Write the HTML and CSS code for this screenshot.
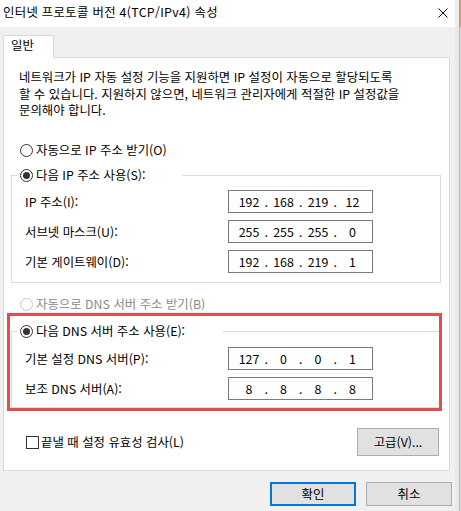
FILE: index.html
```html
<!DOCTYPE html>
<html lang="ko">
<head>
<meta charset="utf-8">
<title>인터넷 프로토콜 버전 4(TCP/IPv4) 속성</title>
<link rel="stylesheet" href="styles.css">
</head>
<body>
<div class="screen">
  <div class="window">
    <div class="titlebar">
      <span class="title">인터넷 프로토콜 버전 4(TCP/IPv4) 속성</span>
      <svg class="close" width="10" height="10" viewBox="0 0 10 10"><path d="M0.5 0.5 L9.5 9.5 M9.5 0.5 L0.5 9.5" stroke="#000" stroke-width="1" fill="none"/></svg>
    </div>
    <div class="tabs">
      <div class="tab">일반</div>
    </div>
    <div class="panel">
      <p class="desc">네트워크가 IP 자동 설정 기능을 지원하면 IP 설정이 자동으로 할당되도록<br>할 수 있습니다. 지원하지 않으면, 네트워크 관리자에게 적절한 IP 설정값을<br>문의해야 합니다.</p>

      <div class="radio radio-auto-ip"><span class="radio-mark"></span><span>자동으로 IP 주소 받기(O)</span></div>

      <div class="group group-ip">
        <div class="legend legend-ip"><span class="radio-mark checked"></span><span>다음 IP 주소 사용(S):</span></div>
        <div class="row first"><span class="label">IP 주소(I):</span>
          <div class="ipbox"><span class="oct">192</span><span class="dot">.</span><span class="oct">168</span><span class="dot">.</span><span class="oct">219</span><span class="dot">.</span><span class="oct">12</span></div></div>
        <div class="row"><span class="label">서브넷 마스크(U):</span>
          <div class="ipbox"><span class="oct">255</span><span class="dot">.</span><span class="oct">255</span><span class="dot">.</span><span class="oct">255</span><span class="dot">.</span><span class="oct">0</span></div></div>
        <div class="row"><span class="label">기본 게이트웨이(D):</span>
          <div class="ipbox"><span class="oct">192</span><span class="dot">.</span><span class="oct">168</span><span class="dot">.</span><span class="oct">219</span><span class="dot">.</span><span class="oct">1</span></div></div>
      </div>

      <div class="radio radio-auto-dns disabled"><span class="radio-mark"></span><span>자동으로 DNS 서버 주소 받기(B)</span></div>

      <div class="group group-dns">
        <div class="legend legend-dns"><span class="radio-mark checked"></span><span>다음 DNS 서버 주소 사용(E):</span></div>
        <div class="row first"><span class="label">기본 설정 DNS 서버(P):</span>
          <div class="ipbox"><span class="oct">127</span><span class="dot">.</span><span class="oct">0</span><span class="dot">.</span><span class="oct">0</span><span class="dot">.</span><span class="oct">1</span></div></div>
        <div class="row"><span class="label">보조 DNS 서버(A):</span>
          <div class="ipbox"><span class="oct">8</span><span class="dot">.</span><span class="oct">8</span><span class="dot">.</span><span class="oct">8</span><span class="dot">.</span><span class="oct">8</span></div></div>
      </div>

      <div class="options">
        <div class="check"><span class="checkbox"></span><span>끝낼 때 설정 유효성 검사(L)</span></div>
        <button class="btn btn-adv">고급(V)...</button>
      </div>

      <div class="highlight"></div>
    </div>
    <div class="actions">
      <button class="btn btn-dialog btn-primary">확인</button>
      <button class="btn btn-dialog">취소</button>
    </div>
  </div>
  <div class="edge"><div class="edge-top"></div><div class="edge-body"></div></div>
</div>
</body>
</html>
```

FILE: styles.css
```css
html, body {
  margin: 0;
  padding: 0;
}
body {
  background: #f0f0f0;
  font-family: "Noto Sans CJK KR", "Noto Sans", sans-serif;
  font-size: 12.4px;
  color: #000;
}
.screen {
  display: flex;
  width: 461px;
  height: 511px;
  overflow: hidden;
}
.window {
  flex: none;
  width: 455px;
  background: #f0f0f0;
}
.titlebar {
  height: 27px;
  box-sizing: border-box;
  background: #fff;
  display: flex;
  align-items: center;
  justify-content: space-between;
  padding: 0 7px 3px 3px;
  line-height: 16px;
}
.title {
  letter-spacing: 0.3px;
}
.close {
  display: block;
  margin-top: 2px;
}
.tabs {
  display: flex;
  padding: 8px 0 0 3px;
}
.tab {
  position: relative;
  z-index: 1;
  width: 51px;
  height: 23px;
  box-sizing: border-box;
  border: 1px solid #d9d9d9;
  border-bottom: none;
  background: #fff;
  padding-left: 7px;
  line-height: 18px;
  margin-bottom: -1px;
}
.panel {
  position: relative;
  margin-left: 3px;
  width: 447px;
  height: 414px;
  box-sizing: border-box;
  border: 1px solid #d9d9d9;
  background: #fff;
  padding-top: 11px;
}
.desc {
  margin: 0 0 0 15px;
  line-height: 16.5px;
  white-space: nowrap;
}
.radio {
  display: flex;
  align-items: center;
  gap: 3px;
  height: 16px;
  line-height: 16px;
  margin-left: 16px;
}
.radio-auto-ip {
  margin-top: 23.5px;
}
.radio-auto-dns {
  margin-top: 13px;
}
.disabled {
  color: #8a8a8a;
}
.radio-mark {
  flex: none;
  width: 13px;
  height: 13px;
  box-sizing: border-box;
  border: 1px solid #333;
  border-radius: 50%;
  background: #fff;
  display: flex;
  align-items: center;
  justify-content: center;
}
.disabled .radio-mark {
  border-color: #c4c4c4;
}
.radio-mark.checked::after {
  content: "";
  width: 7px;
  height: 7px;
  border-radius: 50%;
  background: #333;
}
.group {
  border: 1px solid #dcdcdc;
  margin: 0 8px 0 7px;
}
.group-ip {
  margin-top: 17px;
  padding-bottom: 9px;
}
.group-dns {
  margin-top: 19px;
  padding-bottom: 7px;
}
.legend {
  display: flex;
  align-items: center;
  gap: 3px;
  height: 18px;
  line-height: 16px;
  box-sizing: border-box;
  margin: -10px 0 0 5px;
  padding-left: 3px;
  background: #fff;
}
.legend-ip {
  width: 165px;
}
.legend-dns {
  width: 206px;
}
.row {
  display: flex;
  align-items: center;
  height: 23px;
  margin-top: 7px;
  padding-left: 13px;
  line-height: 16px;
}
.row.first {
  margin-top: 6px;
}
.group-dns .row.first {
  margin-top: 7px;
}
.label {
  flex: 0 0 203px;
}
.ipbox {
  flex: none;
  width: 145px;
  height: 23px;
  box-sizing: border-box;
  border: 1px solid #7a7a7a;
  display: flex;
  align-items: center;
  padding-left: 5px;
  background: #fff;
}
.oct {
  width: 30px;
  text-align: center;
}
.dot {
  width: 4.5px;
  text-align: center;
}
.options {
  display: flex;
  align-items: center;
  justify-content: space-between;
  height: 28px;
  margin-top: 20px;
  padding: 0 10px 0 22px;
}
.check {
  display: flex;
  align-items: center;
  gap: 2px;
  line-height: 16px;
}
.checkbox {
  flex: none;
  width: 13px;
  height: 13px;
  box-sizing: border-box;
  border: 1px solid #333;
  background: #fff;
}
.btn {
  font-family: inherit;
  font-size: 12.4px;
  color: #000;
  background: #e1e1e1;
  border: 1px solid #adadad;
  box-sizing: border-box;
  margin: 0;
  padding: 0;
  line-height: 16px;
}
.btn-adv {
  width: 82px;
  height: 28px;
}
.btn-dialog {
  width: 86px;
  height: 24px;
}
.btn-primary {
  border: 2px solid #0078d7;
}
.actions {
  display: flex;
  justify-content: flex-end;
  gap: 10px;
  margin-top: 11px;
  padding-right: 3px;
}
.highlight {
  position: absolute;
  left: 3px;
  top: 255px;
  width: 435px;
  height: 98px;
  box-sizing: border-box;
  border: 3px solid #e74c4c;
  pointer-events: none;
}
.edge {
  flex: none;
  width: 6px;
  display: flex;
  flex-direction: column;
}
.edge-top {
  height: 27px;
  background: linear-gradient(to right, #ececec 0 4px, #c8a070 4px 6px);
}
.edge-body {
  flex: 1;
  background: linear-gradient(to right, #e9e9e9 0 4px, #8ec2f2 4px 5px, #d8d8d8 5px 6px);
}
```
